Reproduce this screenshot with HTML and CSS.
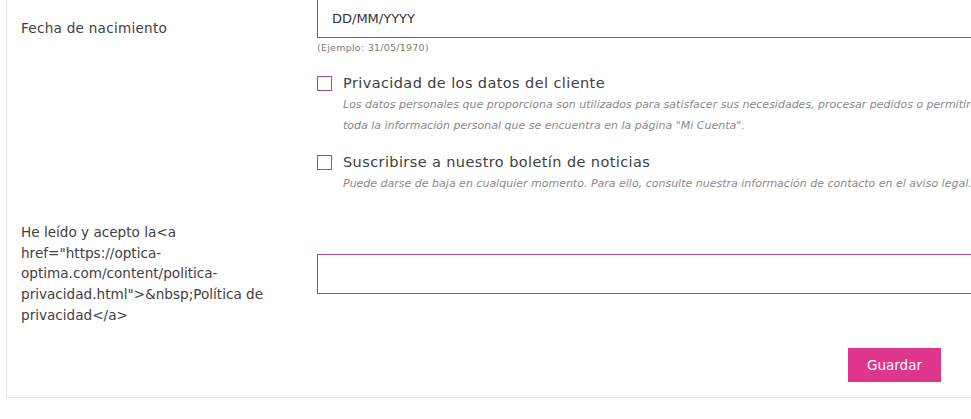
FILE: index.html
```html
<!DOCTYPE html>
<html lang="es">
<head>
    <meta charset="UTF-8">
    <meta name="viewport" content="width=device-width, initial-scale=1.0">
    <title>Mis datos personales</title>
    <link rel="stylesheet" href="styles.css">
</head>
<body>
    <form class="card">
        <div class="form-row">
            <label class="form-label" for="birthday">Fecha de nacimiento</label>
            <div class="form-field">
                <input type="text" id="birthday" class="form-input" placeholder="DD/MM/YYYY">
                <span class="form-hint">(Ejemplo: 31/05/1970)</span>
            </div>
        </div>

        <div class="form-row">
            <div class="form-label"></div>
            <div class="form-field">
                <label class="check">
                    <input type="checkbox" name="customer_privacy">
                    <span class="check-box"></span>
                    <span class="check-text">Privacidad de los datos del cliente</span>
                </label>
                <p class="check-desc">Los datos personales que proporciona son utilizados para satisfacer sus necesidades, procesar pedidos o permitirle el acceso a información específica. Tiene derecho a modificar y eliminar<br>toda la información personal que se encuentra en la página "Mi Cuenta".</p>

                <label class="check check-spaced">
                    <input type="checkbox" name="newsletter">
                    <span class="check-box"></span>
                    <span class="check-text">Suscribirse a nuestro boletín de noticias</span>
                </label>
                <p class="check-desc">Puede darse de baja en cualquier momento. Para ello, consulte nuestra información de contacto en el aviso legal.</p>
            </div>
        </div>

        <div class="form-row form-row-center">
            <label class="form-label" for="psgdpr">He leído y acepto la&lt;a href="https://optica-optima.com/content/politica-privacidad.html"&gt;&amp;nbsp;Política de privacidad&lt;/a&gt;</label>
            <div class="form-field">
                <input type="text" id="psgdpr" class="form-input">
            </div>
        </div>

        <div class="form-footer">
            <button type="submit" class="btn-primary">Guardar</button>
        </div>
    </form>
</body>
</html>
```

FILE: styles.css
```css
html, body {
    margin: 0;
    overflow: hidden;
    background: #fff;
}
body {
    font-family: "DejaVu Sans", Arial, sans-serif;
    color: #414141;
}
.card {
    width: 1200px;
    margin: -2px 0 0 6px;
    padding: 0 0 15px 14px;
    border-left: 1px solid #e6e6e6;
    border-bottom: 1px solid #e6e6e6;
}
.form-row {
    display: grid;
    grid-template-columns: 296px 1fr;
}
.form-row-center {
    align-items: center;
    margin-top: 28px;
}
.form-label {
    font-size: 13.6px;
    line-height: 20.7px;
    padding-top: 20px;
    padding-right: 20px;
}
#birthday + .form-hint,
.form-row:first-child .form-label {
    letter-spacing: 0.25px;
}
.form-row-center .form-label {
    padding-top: 0;
}
.form-field {
    display: flex;
    flex-direction: column;
    align-items: flex-start;
}
.form-input {
    box-sizing: border-box;
    width: 100%;
    height: 40px;
    padding: 0 14px;
    border: 1px solid #a9488a;
    border-radius: 0;
    font-family: inherit;
    font-size: 13px;
    color: #333;
    outline: none;
}
.form-input::placeholder {
    color: #333;
}
.form-hint {
    margin-top: 4px;
    font-size: 9.5px;
    line-height: 12px;
    color: #7a7a7a;
}
.check {
    display: flex;
    align-items: center;
    margin-top: 20px;
    font-size: 14.5px;
    letter-spacing: 0.4px;
    line-height: 18px;
}
.check-spaced {
    margin-top: 17px;
}
.check input {
    display: none;
}
.check-box {
    box-sizing: border-box;
    width: 15px;
    height: 15px;
    border: 1px solid #a9488a;
    margin-right: 11px;
}
.check-desc {
    margin: 2px 0 0 26px;
    font-size: 11px;
    line-height: 21px;
    font-style: italic;
    color: #8a8a8a;
    white-space: nowrap;
}
.form-footer {
    width: 920px;
    display: flex;
    justify-content: flex-end;
    margin-top: 22px;
}
.btn-primary {
    width: 93px;
    height: 34px;
    border: none;
    background-color: #e0358d;
    color: #fff;
    font-family: inherit;
    font-size: 13.5px;
    cursor: pointer;
}
```
